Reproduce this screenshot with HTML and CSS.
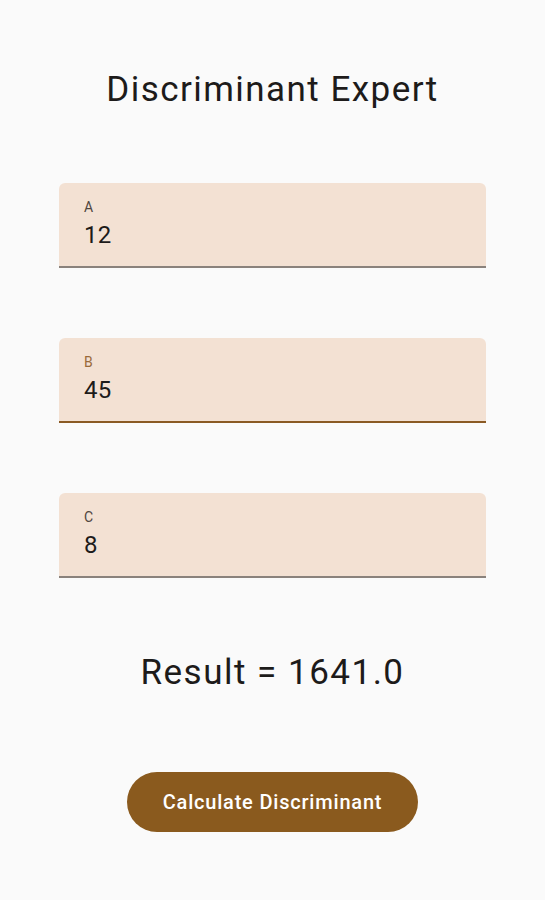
FILE: index.html
```html
<!DOCTYPE html>
<html>
<head>
<meta charset="utf-8">
<link rel="stylesheet" href="styles.css">
</head>
<body>
<main class="screen">
  <h1 class="title">Discriminant Expert</h1>
  <div class="fields">
    <div class="field">
      <span class="label">A</span>
      <span class="value">12</span>
    </div>
    <div class="field focused">
      <span class="label">B</span>
      <span class="value">45</span>
    </div>
    <div class="field">
      <span class="label">C</span>
      <span class="value">8</span>
    </div>
  </div>
  <p class="result">Result = 1641.0</p>
  <button class="calc">Calculate Discriminant</button>
</main>
</body>
</html>
```
FILE: styles.css
```css
html, body {
  margin: 0;
  padding: 0;
  background: #fafafa;
}
.screen {
  width: 545px;
  height: 900px;
  display: flex;
  flex-direction: column;
  align-items: center;
  font-family: Roboto, "Noto Sans", sans-serif;
  color: #1d1b1a;
}
.title {
  margin: 69px 0 0 0;
  font-size: 35px;
  font-weight: 400;
  line-height: 42px;
  letter-spacing: 1.45px;
}
.fields {
  margin-top: 72px;
  display: flex;
  flex-direction: column;
  gap: 70px;
}
.field {
  width: 427px;
  height: 85px;
  box-sizing: border-box;
  background: #f3e1d3;
  border-radius: 6px 6px 0 0;
  border-bottom: 2px solid #8a827c;
  padding: 16px 25px 0 25px;
  display: flex;
  flex-direction: column;
}
.field.focused {
  border-bottom-color: #8a5a24;
}
.label {
  font-size: 14px;
  line-height: 16px;
  letter-spacing: 0.5px;
  color: #4f4540;
}
.focused .label {
  color: #9a6a3a;
}
.value {
  margin-top: 6px;
  font-size: 24px;
  line-height: 28px;
  letter-spacing: 0.3px;
  color: #1d1b1a;
}
.result {
  margin: 74px 0 0 0;
  font-size: 35px;
  line-height: 42px;
  letter-spacing: 1.5px;
}
.calc {
  margin-top: 78px;
  width: 291px;
  height: 60px;
  border: none;
  border-radius: 30px;
  background: #8a5a1e;
  color: #ffffff;
  font-family: Roboto, "Noto Sans", sans-serif;
  font-size: 20px;
  font-weight: 500;
  letter-spacing: 0.8px;
}
```
